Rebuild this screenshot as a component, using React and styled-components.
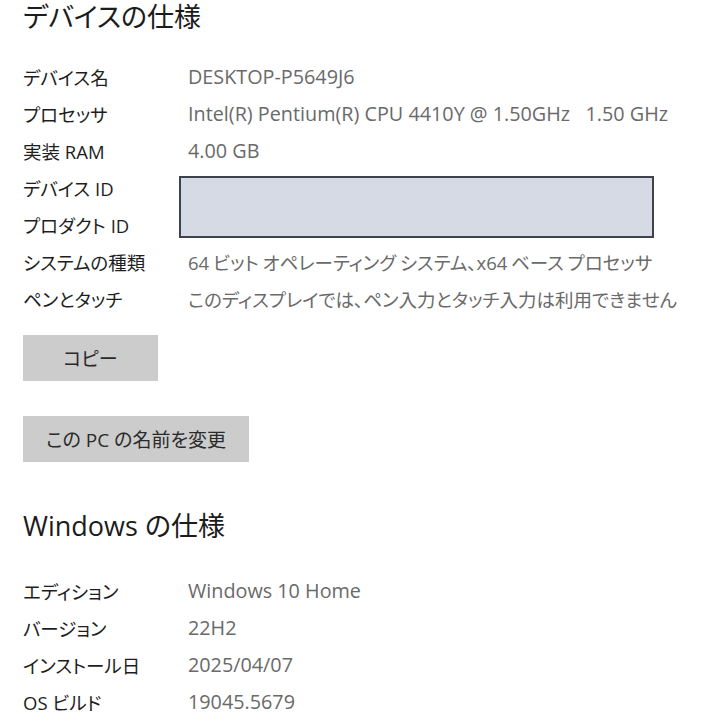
import styled, { createGlobalStyle } from "styled-components";

const Global = createGlobalStyle`
    body {
        margin: 0;
        background: #fff;
        font-family: "Open Sans", "Noto Sans CJK JP", sans-serif;
        font-feature-settings: "palt";
    }
`

const Page = styled.main`
    padding: 0 0 0 23px;
    width: 697px;
`
const Titulo = styled.h2`
    margin: ${props => props.$top || 0}px 0 0;
    padding-top: 2px;
    height: 30px;
    line-height: 30px;
    font-size: 27px;
    font-weight: 400;
    color: #1c1c1c;
`
const Tabla = styled.div`
    display: grid;
    grid-template-columns: 165px 1fr;
    grid-auto-rows: 37px;
    margin-top: ${props => props.$top}px;
`
const Etiqueta = styled.div`
    display: flex;
    align-items: center;
    font-size: 18.5px;
    color: #1e1e1e;
    white-space: nowrap;
`
const Valor = styled.div`
    display: flex;
    align-items: center;
    font-size: ${props => props.$jp ? 18.5 : 19.8}px;
    word-spacing: ${props => props.$jp ? -1 : 0}px;
    color: #6a6a6a;
    white-space: nowrap;
`
const Oculto = styled.div`
    grid-row: span 2;
    margin: 7px 0 5px -9px;
    width: 475px;
    box-sizing: border-box;
    background: #d5dae5;
    border: 2px solid #3d424d;
`
const Boton = styled.button`
    display: block;
    margin-top: ${props => props.$top}px;
    width: ${props => props.$width}px;
    height: 46px;
    border: none;
    background: #cccccc;
    font-family: inherit;
    font-feature-settings: "palt";
    font-size: 19px;
    color: #2a2a2a;
    padding: 0;
`

const dispositivo = [
    ["デバイス名", "DESKTOP-P5649J6"],
    ["プロセッサ", "Intel(R) Pentium(R) CPU 4410Y @ 1.50GHz\u00a0\u00a0\u00a01.50 GHz"],
    ["実装 RAM", "4.00 GB"],
]
const resto = [
    ["システムの種類", "64 ビット オペレーティング システム、x64 ベース プロセッサ"],
    ["ペンとタッチ", "このディスプレイでは、ペン入力とタッチ入力は利用できません"],
]
const windows = [
    ["エディション", "Windows 10 Home"],
    ["バージョン", "22H2"],
    ["インストール日", "2025/04/07"],
    ["OS ビルド", "19045.5679"],
]

const App = () => {
    return (
        <Page>
            <Global />
            <Titulo>デバイスの仕様</Titulo>
            <Tabla $top={26}>
                {dispositivo.map(([k, v]) => [
                    <Etiqueta key={k}>{k}</Etiqueta>,
                    <Valor key={k + "v"}>{v}</Valor>,
                ])}
                <Etiqueta>デバイス ID</Etiqueta>
                <Oculto />
                <Etiqueta>プロダクト ID</Etiqueta>
                {resto.map(([k, v]) => [
                    <Etiqueta key={k}>{k}</Etiqueta>,
                    <Valor key={k + "v"} $jp>{v}</Valor>,
                ])}
            </Tabla>
            <Boton $top={18} $width={135}>コピー</Boton>
            <Boton $top={35} $width={226}>この PC の名前を変更</Boton>
            <Titulo $top={47}>Windows の仕様</Titulo>
            <Tabla $top={31}>
                {windows.map(([k, v]) => [
                    <Etiqueta key={k}>{k}</Etiqueta>,
                    <Valor key={k + "v"}>{v}</Valor>,
                ])}
            </Tabla>
        </Page>
    )
}

export default App;
